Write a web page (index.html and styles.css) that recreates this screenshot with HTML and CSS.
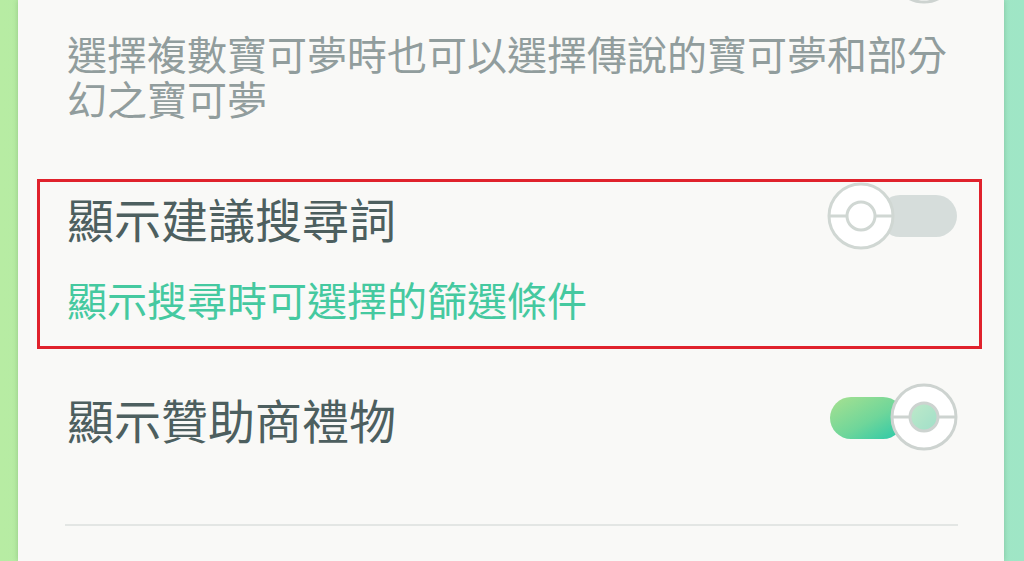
FILE: index.html
```html
<!DOCTYPE html>
<html lang="zh-Hant">
<head>
    <meta charset="UTF-8">
    <meta name="viewport" content="width=device-width, initial-scale=1.0">
    <title>設定</title>
    <link rel="stylesheet" href="styles.css">
</head>
<body>
    <div class="card">
        <div class="list">
            <div class="setting">
                <div class="setting-head">
                    <span class="setting-title"></span>
                    <div class="toggle on">
                        <span class="track"></span>
                        <svg class="knob" viewBox="0 0 68 68">
                            <defs>
                                <linearGradient id="dotA" x1="0" y1="0" x2="1" y2="1">
                                    <stop offset="0" stop-color="#bfe9c9"/>
                                    <stop offset="1" stop-color="#9fdfc9"/>
                                </linearGradient>
                            </defs>
                            <circle cx="34" cy="34" r="32" fill="#fff" stroke="#cdd3d0" stroke-width="3"/>
                            <line x1="3" y1="34" x2="65" y2="34" stroke="#cdd3d0" stroke-width="3"/>
                            <circle cx="34" cy="34" r="14" fill="url(#dotA)" stroke="#cdd3d0" stroke-width="3"/>
                        </svg>
                    </div>
                </div>
                <p class="setting-desc">選擇複數寶可夢時也可以選擇傳說的寶可夢和部分幻之寶可夢</p>
            </div>

            <div class="setting marked">
                <div class="setting-head">
                    <span class="setting-title">顯示建議搜尋詞</span>
                    <div class="toggle">
                        <span class="track"></span>
                        <svg class="knob" viewBox="0 0 68 68">
                            <circle cx="34" cy="34" r="32" fill="#fff" stroke="#d0d7d3" stroke-width="3"/>
                            <line x1="3" y1="34" x2="65" y2="34" stroke="#d0d7d3" stroke-width="3"/>
                            <circle cx="34" cy="34" r="14" fill="#fff" stroke="#d0d7d3" stroke-width="3"/>
                        </svg>
                    </div>
                </div>
                <p class="setting-desc accent">顯示搜尋時可選擇的篩選條件</p>
            </div>

            <div class="setting">
                <div class="setting-head">
                    <span class="setting-title">顯示贊助商禮物</span>
                    <div class="toggle on">
                        <span class="track"></span>
                        <svg class="knob" viewBox="0 0 68 68">
                            <defs>
                                <linearGradient id="dotC" x1="0" y1="0" x2="1" y2="1">
                                    <stop offset="0" stop-color="#bfe9c9"/>
                                    <stop offset="1" stop-color="#9fdfc9"/>
                                </linearGradient>
                            </defs>
                            <circle cx="34" cy="34" r="32" fill="#fff" stroke="#cdd3d0" stroke-width="3"/>
                            <line x1="3" y1="34" x2="65" y2="34" stroke="#cdd3d0" stroke-width="3"/>
                            <circle cx="34" cy="34" r="14" fill="url(#dotC)" stroke="#cdd3d0" stroke-width="3"/>
                        </svg>
                    </div>
                </div>
            </div>
        </div>
        <hr class="divider">
    </div>
</body>
</html>
```

FILE: styles.css
```css
html, body {
    margin: 0;
    height: 100%;
    overflow: hidden;
}
body {
    background: linear-gradient(to right, #b7eca3, #a9e9b4 50%, #9fe6c6);
    font-family: "Noto Sans CJK TC", "Noto Sans", sans-serif;
}
.card {
    display: flow-root;
    margin: 0 20px 0 18px;
    height: 100%;
    background-color: #f9f9f7;
    box-shadow: 0 0 5px rgba(40, 90, 40, 0.25);
    padding: 0 46px 0 49px;
    box-sizing: border-box;
}
.list {
    display: flex;
    flex-direction: column;
    gap: 31px;
    margin-top: -67px;
}
.setting {
    margin: 0 -24px 0 -30px;
    padding: 0 21px 24px 27px;
    border: 3px solid #ffffff00;
}
.setting.marked {
    border-color: #e0222c;
}
.setting-head {
    display: flex;
    align-items: center;
    justify-content: space-between;
    height: 68px;
}
.setting-title {
    font-size: 47px;
    line-height: 1;
    color: #4d5f5f;
    padding-top: 2px;
}
.setting-desc {
    margin: 27px 0 0;
    font-size: 40px;
    line-height: 45px;
    color: #919d9d;
}
.setting-desc.accent {
    color: #45c9a0;
}
.toggle {
    position: relative;
    width: 131px;
    height: 68px;
    flex-shrink: 0;
}
.track {
    position: absolute;
    top: 13px;
    right: 1px;
    width: 78px;
    height: 42px;
    border-radius: 21px;
    background-color: #d6dddb;
}
.knob {
    position: absolute;
    top: 0;
    left: 0;
    width: 68px;
    height: 68px;
}
.toggle.on .track {
    left: 3px;
    right: auto;
    width: 74px;
    top: 14px;
    background: linear-gradient(to bottom right, #a8e190, #6fd69a 55%, #27c8aa);
}
.toggle.on .knob {
    left: auto;
    right: 0;
}
.divider {
    margin: 46px 0 0 -2px;
    border: none;
    height: 2px;
    background-color: #e3e6e4;
}
```
